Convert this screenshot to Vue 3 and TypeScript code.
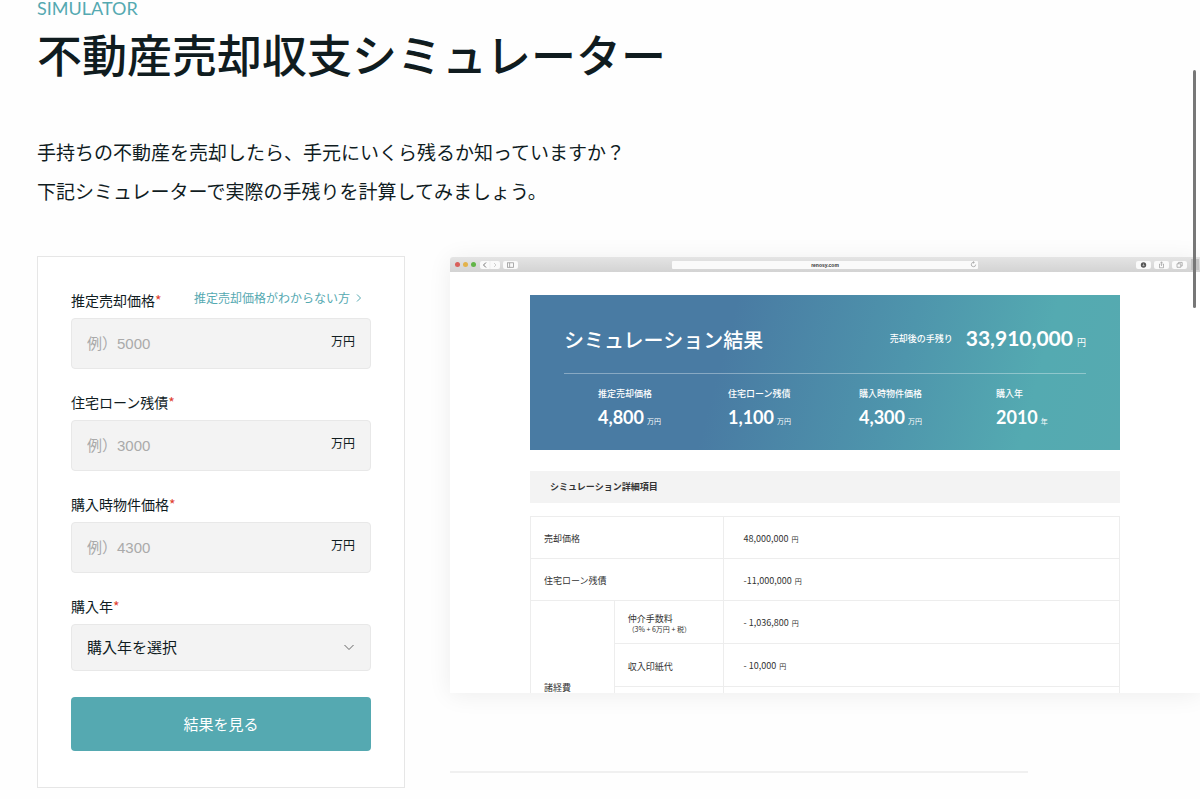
<script setup lang="ts">
import { ref } from 'vue'

interface AmountField {
  id: string
  label: string
  placeholder: string
  help?: string
}

interface Stat {
  label: string
  value: string
  unit: string
}

const fields: AmountField[] = [
  { id: 'price', label: '推定売却価格', placeholder: '例）5000', help: '推定売却価格がわからない方' },
  { id: 'loan', label: '住宅ローン残債', placeholder: '例）3000' },
  { id: 'purchase', label: '購入時物件価格', placeholder: '例）4300' },
]

const amounts = ref<Record<string, string>>({ price: '', loan: '', purchase: '' })
const year = ref('')

const stats: Stat[] = [
  { label: '推定売却価格', value: '4,800', unit: '万円' },
  { label: '住宅ローン残債', value: '1,100', unit: '万円' },
  { label: '購入時物件価格', value: '4,300', unit: '万円' },
  { label: '購入年', value: '2010', unit: '年' },
]
</script>

<template>
  <main class="page">
    <header class="intro">
      <p class="eyebrow">SIMULATOR</p>
      <h1>不動産売却収支シミュレーター</h1>
      <p class="lead">
        手持ちの不動産を売却したら、手元にいくら残るか知っていますか？<br />下記シミュレーターで実際の手残りを計算してみましょう。
      </p>
    </header>

    <div class="columns">
      <form class="card" @submit.prevent>
        <div v-for="f in fields" :key="f.id" class="field">
          <div class="field-head">
            <label :for="f.id">{{ f.label }}<span class="req">*</span></label>
            <a v-if="f.help" class="help" href="#">
              {{ f.help }}
              <svg width="6" height="10" viewBox="0 0 6 10" aria-hidden="true">
                <path d="M1 1.5 4.5 5 1 8.5" fill="none" stroke="currentColor" />
              </svg>
            </a>
          </div>
          <div class="box">
            <input :id="f.id" v-model="amounts[f.id]" type="text" :placeholder="f.placeholder" />
            <span class="unit">万円</span>
          </div>
        </div>
        <div class="field">
          <div class="field-head">
            <label for="year">購入年<span class="req">*</span></label>
          </div>
          <div class="box select-box">
            <select id="year" v-model="year">
              <option value="">購入年を選択</option>
            </select>
            <svg class="chevron" width="12" height="8" viewBox="0 0 12 8" aria-hidden="true">
              <path d="M1.500 1 6 5.500 10.500 1" fill="none" stroke="#666" />
            </svg>
          </div>
        </div>
        <button class="submit" type="submit">結果を見る</button>
      </form>

      <div class="side">
        <section class="window">
          <div class="toolbar">
            <div class="tools">
              <span class="dot red"></span>
              <span class="dot yellow"></span>
              <span class="dot green"></span>
              <span class="chip nav">
                <svg width="20" height="8" viewBox="0 0 20 8" aria-hidden="true">
                  <path d="M6 1.500 3.500 4 6 6.500" fill="none" stroke="#777" />
                  <path d="M14 2l2 2-2 2" fill="none" stroke="#d0d0d0" />
                  <path d="M10 0v8" stroke="#efefef" />
                </svg>
              </span>
              <span class="chip">
                <svg width="15" height="8" viewBox="0 0 15 8" aria-hidden="true">
                  <rect x="4.500" y="1.800" width="6" height="4.500" fill="none" stroke="#999" stroke-width=".8" />
                  <path d="M6.600 1.800v4.500" stroke="#999" stroke-width=".8" />
                </svg>
              </span>
            </div>
            <div class="address">
              <span>renosy.com</span>
              <svg width="7" height="7" viewBox="0 0 7 7" aria-hidden="true">
                <path d="M5.700 3.600a2.200 2.200 0 1 1-1.700-2.200M3.200.4l1.200 1-1.200 1" fill="none" stroke="#999" stroke-width=".7" />
              </svg>
            </div>
            <div class="tools end">
              <span class="chip">
                <svg width="15" height="8" viewBox="0 0 15 8" aria-hidden="true">
                  <circle cx="7.500" cy="4" r="2.700" fill="#555" />
                  <path d="M7.500 2.600v2.400M6.500 4.200l1 1 1-1" fill="none" stroke="#ddd" stroke-width=".6" />
                </svg>
              </span>
              <span class="chip">
                <svg width="15" height="8" viewBox="0 0 15 8" aria-hidden="true">
                  <path d="M6.500 3H5.500v3.800h4V3h-1M7.500 5V.8M6.500 1.800l1-1 1 1" fill="none" stroke="#999" stroke-width=".7" />
                </svg>
              </span>
              <span class="chip">
                <svg width="15" height="8" viewBox="0 0 15 8" aria-hidden="true">
                  <path d="M5 2.800h3.800v3.500H5zM6.400 2.800V1.400h3.800V5H8.800" fill="none" stroke="#999" stroke-width=".7" />
                </svg>
              </span>
              <span class="new-tab"></span>
            </div>
          </div>

          <div class="result">
            <div class="banner">
              <div class="banner-top">
                <h2>シミュレーション結果</h2>
                <p class="total">
                  <span class="total-label">売却後の手残り</span>
                  <strong>33,910,000</strong>
                  <span class="yen">円</span>
                </p>
              </div>
              <dl class="stats">
                <div v-for="s in stats" :key="s.label">
                  <dt>{{ s.label }}</dt>
                  <dd>
                    <strong>{{ s.value }}</strong><small>{{ s.unit }}</small>
                  </dd>
                </div>
              </dl>
            </div>

            <h3>シミュレーション詳細項目</h3>

            <table>
              <colgroup>
                <col class="c1" />
                <col class="c2" />
                <col />
              </colgroup>
              <tbody>
                <tr>
                  <th colspan="2" scope="row">売却価格</th>
                  <td>48,000,000 <small>円</small></td>
                </tr>
                <tr>
                  <th colspan="2" scope="row">住宅ローン残債</th>
                  <td>-11,000,000 <small>円</small></td>
                </tr>
              </tbody>
              <tbody class="costs">
                <tr>
                  <th rowspan="4" scope="rowgroup">諸経費</th>
                  <th scope="row">仲介手数料<span class="note">（3% + 6万円 + 税）</span></th>
                  <td>- 1,036,800 <small>円</small></td>
                </tr>
                <tr>
                  <th scope="row">収入印紙代</th>
                  <td>- 10,000 <small>円</small></td>
                </tr>
                <tr>
                  <th></th>
                  <td></td>
                </tr>
                <tr>
                  <th></th>
                  <td></td>
                </tr>
              </tbody>
            </table>
          </div>
        </section>
        <hr />
      </div>
    </div>
    <div class="scrollbar" aria-hidden="true"></div>
  </main>
</template>

<style>
body {
  margin: 0;
  background: #fefefe;
}
</style>

<style scoped>
* {
  box-sizing: border-box;
}

.page {
  position: relative;
  min-height: 100vh;
  padding: 0 0 11px 37px;
  border-bottom: 1px solid #a4a4a4;
  color: #101c1f;
  font-family: 'Noto Sans CJK JP', sans-serif;
}

h1,
h2,
h3,
p,
dl,
dd {
  margin: 0;
}

.eyebrow {
  color: #55a9b1;
  font: 400 18px/16px Lato, sans-serif;
}

h1 {
  margin-top: 6px;
  font-size: 45px;
  font-weight: 500;
  line-height: 64px;
}

.lead {
  margin-top: 46px;
  font-size: 19px;
  line-height: 39px;
}

.columns {
  display: grid;
  grid-template-columns: minmax(0, 368fr) minmax(0, 750fr);
  gap: 45px;
  align-items: start;
  margin-top: 46px;
}

.card {
  padding: 33px 33px 36px;
  border: 1px solid #e6e6e6;
  background: #fff;
}

.field {
  margin-bottom: 23px;
}

.field-head {
  display: flex;
  align-items: flex-start;
  justify-content: space-between;
  height: 28px;
  padding-right: 9px;
}

label {
  font-size: 14px;
  line-height: 20px;
  white-space: nowrap;
}

.req {
  color: #e0402f;
}

.help {
  display: flex;
  gap: 6px;
  align-items: center;
  color: #55a9b1;
  font-size: 12px;
  line-height: 16px;
  text-decoration: none;
  white-space: nowrap;
}

.box {
  display: flex;
  align-items: center;
  height: 51px;
  padding: 0 15px;
  border: 1px solid #e8e8e8;
  border-radius: 4px;
  background: #f3f3f3;
}

input,
select {
  flex: 1;
  min-width: 0;
  height: 100%;
  padding: 0;
  border: 0;
  outline: 0;
  appearance: none;
  background: transparent;
  color: #101c1f;
  font: 15px 'Liberation Sans', 'Noto Sans CJK JP', sans-serif;
}

input::placeholder {
  color: #aaa;
  opacity: 1;
}

.unit {
  padding-bottom: 6px;
  font-size: 12px;
}

.select-box {
  height: 47px;
}

.submit {
  display: block;
  width: 100%;
  height: 54px;
  margin-top: 26px;
  padding: 0 0 2px;
  border: 0;
  border-radius: 4px;
  background: #55a9b1;
  color: #fff;
  font: 15px 'Noto Sans CJK JP', sans-serif;
}

.window {
  aspect-ratio: 750 / 436;
  margin-top: 1px;
  overflow: hidden;
  border-radius: 3px 0 0 0;
  background: #fff;
  box-shadow: 0 2px 24px rgba(0, 0, 0, 0.07);
}

.toolbar {
  display: grid;
  grid-template-columns: 1fr 306px 1fr;
  align-items: center;
  height: 15px;
  background: linear-gradient(#e4e4e4, #d3d3d3);
}

.tools {
  display: flex;
  gap: 3px;
  align-items: center;
  padding-left: 5px;
}

.tools.end {
  justify-content: flex-end;
  padding: 0 1px 0 0;
}

.dot {
  width: 5px;
  height: 5px;
  border-radius: 50%;
}

.red {
  background: #d9605b;
}

.yellow {
  background: #e3b34c;
}

.green {
  background: #62b548;
}

.chip {
  display: flex;
  height: 8px;
  border-radius: 2px;
  background: #fafafa;
}

.nav {
  margin-left: 1px;
}

.new-tab {
  width: 8px;
  height: 11px;
  margin-left: 1px;
  background: #c4c4c4;
}

.address {
  display: grid;
  grid-template-columns: 1fr auto;
  align-items: center;
  height: 8px;
  padding: 0 1px 0 8px;
  border-radius: 1px;
  background: #fafafa;
  color: #333;
  font: 700 5px/8px 'Liberation Sans', sans-serif;
  text-align: center;
}

.result {
  padding: 23px 80px 0;
}

.banner {
  padding: 0 34px;
  background: linear-gradient(105deg, #497ba3 0%, #497ba3 33%, #4e95ac 62%, #54aab1 84%, #56aab0 100%);
  color: #fff;
}

.banner-top {
  display: flex;
  align-items: center;
  justify-content: space-between;
  height: 79px;
  padding-top: 11px;
  border-bottom: 1px solid rgba(255, 255, 255, 0.35);
}

h2 {
  font-size: 20px;
  font-weight: 500;
  line-height: 30px;
}

.total {
  display: flex;
  align-items: baseline;
  padding-bottom: 3px;
}

.total-label {
  align-self: center;
  margin-right: 13px;
  font-size: 9px;
  font-weight: 500;
}

.total strong {
  font: 700 21px/30px Lato, sans-serif;
}

.yen {
  margin-left: 4px;
  font-size: 9px;
}

.stats {
  display: grid;
  grid-template-columns: 130fr 131fr 137fr 90fr;
  height: 76px;
  padding: 12px 0 0 34px;
}

dt {
  font-size: 9px;
  font-weight: 500;
  line-height: 16px;
}

dd {
  margin-top: 2px;
  line-height: 26px;
  white-space: nowrap;
}

dd strong {
  font: 700 18px/26px Lato, sans-serif;
  font-kerning: none;
}

dd small {
  margin-left: 3px;
  font-size: 7px;
}

h3 {
  margin-top: 21px;
  padding-left: 20px;
  background: #f3f3f3;
  color: #333;
  font-size: 9px;
  font-weight: 700;
  line-height: 32px;
}

table {
  width: 100%;
  margin-top: 13px;
  border-collapse: collapse;
  table-layout: fixed;
  color: #333;
  font-size: 9px;
  line-height: 13px;
}

.c1 {
  width: 14.2%;
}

.c2 {
  width: 18.5%;
}

tr {
  height: 42px;
}

.costs tr {
  height: 43px;
}

th,
td {
  padding: 2px 0 0 13px;
  border: 1px solid #ededed;
  font-weight: 400;
  text-align: left;
}

td {
  padding-left: 20px;
}

td small {
  margin-left: 1px;
  font-size: 7px;
}

.note {
  display: block;
  font-size: 7px;
  line-height: 9px;
}

hr {
  width: 77%;
  height: 2px;
  margin: 78px auto 0 0;
  border: 0;
  background: #f0f0f0;
}

.scrollbar {
  position: absolute;
  top: 70px;
  right: 4px;
  width: 3px;
  height: 238px;
  border-radius: 2px;
  background: #777;
}
</style>
